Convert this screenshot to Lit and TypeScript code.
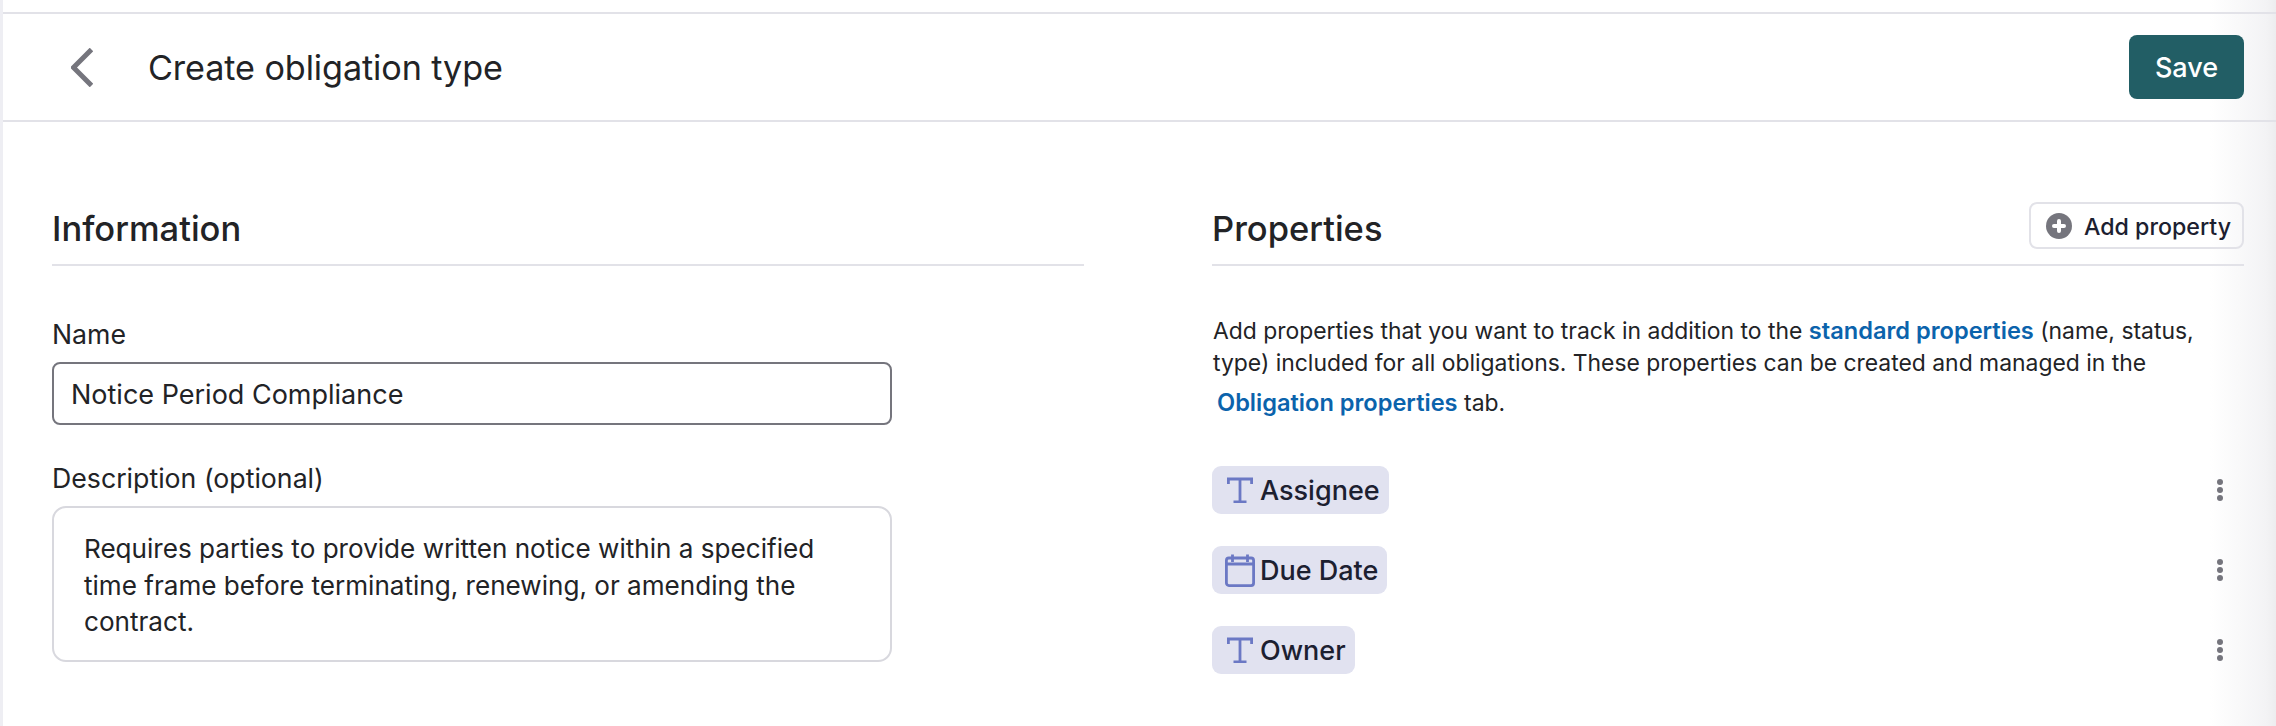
import { LitElement, html, css, svg } from "lit";
import { customElement } from "lit/decorators.js";

const tIcon = svg`<svg class="ico t" viewBox="0 0 26 26" fill="none" stroke="#6b78c4" stroke-width="2.8"><path d="M1.4 7V2H24.6V7M13 2V25M6.5 25H19.5"/></svg>`;
const calIcon = svg`<svg class="ico cal" viewBox="0 0 30 33" fill="none" stroke="#6b78c4" stroke-width="2.8"><rect x="1.4" y="4" width="27.2" height="27.6" rx="2.5"/><path d="M1.4 10H28.6M7.5 0.5V8M22.5 0.5V8"/></svg>`;

const props = [
  { name: "Assignee", icon: tIcon },
  { name: "Due Date", icon: calIcon },
  { name: "Owner", icon: tIcon },
];

@customElement("app-root")
export class AppRoot extends LitElement {
  static styles = css`
    :host { display: block; width: 2276px; height: 726px; overflow: hidden;
      background: linear-gradient(to right, #fff 2210px, #f3f3f5 2266px, #ededef 2276px);
      font-family: Inter, "Noto Sans", sans-serif; color: #222326; }
    .page { border-left: 3px solid #eeeef3; height: 726px; box-sizing: border-box; }
    .topbar { height: 12px; border-bottom: 2px solid #e2e2e8; }
    .header { height: 106px; border-bottom: 2px solid #e2e2e8; display: flex; align-items: center; padding: 0 32px 0 68px; }
    .back { width: 22px; height: 39px; display: block; }
    h1 { margin: 0 0 0 55px; font-size: 34.2px; font-weight: 400; flex: 1; letter-spacing: -0.1px; }
    .save { width: 115px; height: 64px; border-radius: 8px; background: #225e65; color: #fff; display: flex; align-items: center; justify-content: center; font-size: 27px; font-weight: 450; }
    .main { display: grid; grid-template-columns: 1032px 1032px; column-gap: 128px; padding: 80px 32px 0 49px; }
    .head { display: flex; align-items: center; justify-content: space-between; height: 47px; padding-bottom: 15px; border-bottom: 2px solid #e2e2e8; }
    h2 { margin: 6px 0 0; font-size: 34.5px; font-weight: 500; }
    .add { width: 215px; height: 47px; box-sizing: border-box; border: 2px solid #e2e2e8; border-radius: 8px; display: flex; align-items: center; padding-left: 15px; gap: 12px; font-size: 23.2px; font-weight: 450; color: #1c2030; }
    .add svg { width: 26px; height: 26px; }
    .add span { margin-top: 2px; }
    .label { font-size: 26.7px; line-height: 30px; margin-top: 53px; color: #222326; }
    .label.second { margin-top: 38px; }
    .input { width: 840px; height: 63px; box-sizing: border-box; border: 2px solid #75757d; border-radius: 8px; display: flex; align-items: center; padding: 2px 0 0 17px; font-size: 27px; margin-top: 13px; }
    .textarea { width: 840px; height: 156px; box-sizing: border-box; border: 2px solid #d8d8de; border-radius: 14px; padding: 23px 30px; font-size: 26.1px; line-height: 36.5px; margin-top: 13px; }
    p { margin: 49px 0 0 1px; font-size: 22.9px; line-height: 32px; width: 1032px; }
    p .l3 { display: block; margin-top: 8px; padding-left: 4px; }
    a { color: #0b63ac; font-weight: 600; font-size: 23.6px; }
    .rows { margin-top: 47px; display: flex; flex-direction: column; gap: 32px; }
    .row { display: flex; align-items: center; justify-content: space-between; height: 48px; padding-right: 21px; }
    .chip { height: 48px; display: flex; align-items: center; gap: 7px; padding: 0 9px 0 15px; border-radius: 9px; background: #e1e2f0; font-size: 27px; font-weight: 500; color: #1c2030; box-sizing: border-box; }
    .ico.t { width: 26px; height: 26px; }
    .ico.cal { width: 30px; height: 33px; margin-left: -2px; margin-right: -2px; }
    .dots { display: flex; flex-direction: column; gap: 2px; }
    .dots i { width: 6px; height: 6px; border-radius: 50%; background: #75757d; display: block; }
  `;

  render() {
    return html`
      <div class="page">
        <div class="topbar"></div>
        <div class="header">
          <svg class="back" viewBox="0 0 22 39" fill="none" stroke="#75757d" stroke-width="5"><path d="M20.5 1.5L2.5 19.5L20.5 37.5"/></svg>
          <h1>Create obligation type</h1>
          <div class="save">Save</div>
        </div>
        <div class="main">
          <section>
            <div class="head"><h2>Information</h2></div>
            <div class="label">Name</div>
            <div class="input">Notice Period Compliance</div>
            <div class="label second">Description (optional)</div>
            <div class="textarea">Requires parties to provide written notice within a specified<br />time frame before terminating, renewing, or amending the<br />contract.</div>
          </section>
          <section>
            <div class="head">
              <h2>Properties</h2>
              <div class="add">
                <svg viewBox="0 0 26 26"><circle cx="13" cy="13" r="13" fill="#75757d"/><path d="M13 8V18M8 13H18" stroke="#fff" stroke-width="4" stroke-linecap="round"/></svg>
                <span>Add property</span>
              </div>
            </div>
            <p>Add properties that you want to track in addition to the <a>standard properties</a> (name, status,<br />type) included for all obligations. These properties can be created and managed in the<span class="l3"><a>Obligation properties</a> tab.</span></p>
            <div class="rows">
              ${props.map((r) => html`<div class="row"><div class="chip">${r.icon}${r.name}</div><div class="dots"><i></i><i></i><i></i></div></div>`)}
            </div>
          </section>
        </div>
      </div>
    `;
  }
}
